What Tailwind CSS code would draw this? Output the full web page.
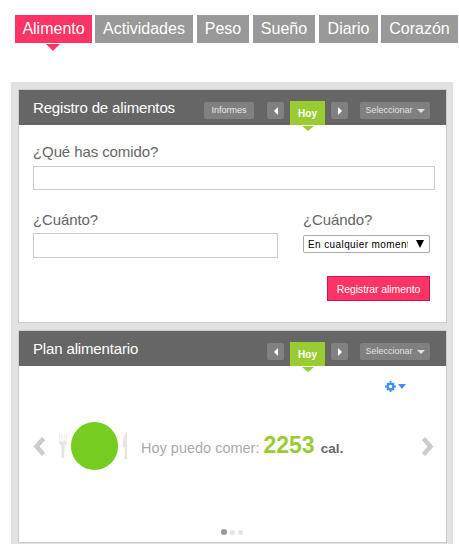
<!DOCTYPE html>
<html lang="es">
<head>
    <meta charset="UTF-8">
    <meta name="viewport" content="width=device-width, initial-scale=1.0">
    <title>Alimento</title>
    <script src="https://cdn.jsdelivr.net/npm/@tailwindcss/browser@4"></script>
</head>
<body class="bg-white h-[544px] w-[459px] overflow-hidden font-['Liberation_Sans',Arial,sans-serif]">
    <!-- pestañas -->
    <nav class="flex pl-[15px] pt-[15px] h-[82px] items-start text-[16px] text-white leading-[27px]">
        <a class="relative w-[77px] h-[28px] bg-[#ff3366] text-center mr-[3px]">Alimento
            <span class="absolute left-[31px] top-[29px] w-0 h-0 border-x-[7px] border-x-transparent border-t-[7px] border-t-[#ff3366]"></span>
        </a>
        <a class="w-[98px] h-[28px] bg-[#999999] text-center mr-[4px]">Actividades</a>
        <a class="w-[52px] h-[28px] bg-[#999999] text-center mr-[4px]">Peso</a>
        <a class="w-[62px] h-[28px] bg-[#999999] text-center mr-[4px]">Sueño</a>
        <a class="w-[59px] h-[28px] bg-[#999999] text-center mr-[3px]">Diario</a>
        <a class="w-[77px] h-[28px] bg-[#999999] text-center">Corazón</a>
    </nav>

    <main class="ml-[11px] w-[442px] h-[462px] bg-[#e1e3e2] pl-[7px] pr-[6px] pt-[7px]">
        <!-- registro -->
        <section class="h-[234px] bg-white border border-[#cccccc] mb-[7px]">
            <header class="flex items-start h-[35px] bg-[#666666] text-white">
                <h2 class="w-[185px] pl-[14px] pt-[8px] text-[15px] tracking-[-0.15px] leading-[20px] shrink-0">Registro de alimentos</h2>
                <span class="w-[50px] h-[17px] mt-[12px] mr-[13px] rounded-[2px] bg-[#808080] text-[#e8e8e8] text-[9px] leading-[16px] text-center">Informes</span>
                <span class="flex items-center justify-center w-[17px] h-[17px] mt-[12px] mr-[6px] rounded-[2px] bg-[#808080]">
                    <span class="w-0 h-0 border-y-[4px] border-y-transparent border-r-[4px] border-r-white"></span>
                </span>
                <span class="relative w-[35px] h-[24px] mt-[11px] mr-[6px] bg-[#99cc33] text-[10px] font-bold leading-[26px] text-center">Hoy
                    <span class="absolute left-[12px] top-[25px] w-0 h-0 border-x-[6px] border-x-transparent border-t-[5px] border-t-[#99cc33]"></span>
                </span>
                <span class="flex items-center justify-center w-[17px] h-[17px] mt-[12px] mr-[12px] rounded-[2px] bg-[#808080]">
                    <span class="w-0 h-0 border-y-[4px] border-y-transparent border-l-[4px] border-l-white"></span>
                </span>
                <span class="flex items-center justify-center gap-[4px] w-[70px] h-[17px] mt-[12px] pt-[1px] rounded-[2px] bg-[#808080] text-[#e0e0e0] text-[9px]">Seleccionar
                    <span class="w-0 h-0 border-x-[4px] border-x-transparent border-t-[4px] border-t-[#e0e0e0]"></span>
                </span>
            </header>
            <div class="pl-[14px] pr-[11px] pt-[17px] text-[#666666] text-[15px] tracking-[-0.1px]">
                <label class="block leading-[20px]">¿Qué has comido?</label>
                <div class="h-[24px] w-[402px] mt-[4px] border border-[#cccccc]"></div>
                <div class="flex mt-[20px]">
                    <div class="w-[270px]">
                        <label class="block leading-[20px]">¿Cuánto?</label>
                        <div class="h-[25px] w-[245px] mt-[3px] border border-[#cccccc]"></div>
                    </div>
                    <div class="w-[127px]">
                        <label class="block leading-[20px]">¿Cuándo?</label>
                        <div class="flex items-center h-[18px] mt-[5px] pl-[4px] border border-[#a9a9a9] rounded-[2px] text-black text-[10px] tracking-[0.4px]">
                            <span class="w-[100px] overflow-hidden whitespace-nowrap">En cualquier momento</span>
                            <span class="ml-[8px] w-0 h-0 border-x-[4px] border-x-transparent border-t-[8px] border-t-black"></span>
                        </div>
                    </div>
                </div>
                <div class="flex justify-end mt-[18px] pr-[5px]">
                    <button class="w-[103px] h-[25px] bg-[#ff3366] border border-[#c2184b] text-white text-[10.5px] leading-[22px]">Registrar alimento</button>
                </div>
            </div>
        </section>

        <!-- plan -->
        <section class="h-[213px] bg-white border border-[#cccccc]">
            <header class="flex items-start h-[35px] bg-[#666666] text-white">
                <h2 class="w-[248px] pl-[14px] pt-[8px] text-[15px] tracking-[-0.15px] leading-[20px] shrink-0">Plan alimentario</h2>
                <span class="flex items-center justify-center w-[17px] h-[17px] mt-[12px] mr-[6px] rounded-[2px] bg-[#808080]">
                    <span class="w-0 h-0 border-y-[4px] border-y-transparent border-r-[4px] border-r-white"></span>
                </span>
                <span class="relative w-[35px] h-[24px] mt-[11px] mr-[6px] bg-[#99cc33] text-[10px] font-bold leading-[26px] text-center">Hoy
                    <span class="absolute left-[12px] top-[25px] w-0 h-0 border-x-[6px] border-x-transparent border-t-[5px] border-t-[#99cc33]"></span>
                </span>
                <span class="flex items-center justify-center w-[17px] h-[17px] mt-[12px] mr-[12px] rounded-[2px] bg-[#808080]">
                    <span class="w-0 h-0 border-y-[4px] border-y-transparent border-l-[4px] border-l-white"></span>
                </span>
                <span class="flex items-center justify-center gap-[4px] w-[70px] h-[17px] mt-[12px] pt-[1px] rounded-[2px] bg-[#808080] text-[#e0e0e0] text-[9px]">Seleccionar
                    <span class="w-0 h-0 border-x-[4px] border-x-transparent border-t-[4px] border-t-[#e0e0e0]"></span>
                </span>
            </header>
            <div class="relative h-[176px] pt-[15px]">
                <div class="flex justify-end items-center gap-[2px] h-[11px] pr-[40px]">
                    <svg width="11" height="11" viewBox="0 0 12 12"><circle cx="6" cy="6" r="3.2" fill="none" stroke="#3b8ff5" stroke-width="2.6"/><path d="M5 0h2v2H5zM5 10h2v2H5zM0 5h2v2H0zM10 5h2v2h-2zM1.5 2.9l1.4-1.4 1.2 1.2-1.4 1.4zM7.9 9.3l1.4-1.4 1.2 1.2-1.4 1.4zM1.5 9.1l1.2-1.2 1.4 1.4-1.2 1.2zM7.9 2.7l1.2-1.2 1.4 1.4-1.2 1.2z" fill="#3b8ff5"/></svg>
                    <span class="w-0 h-0 border-x-[4px] border-x-transparent border-t-[5px] border-t-[#3b8ff5]"></span>
                </div>
                <div class="flex items-center h-[48px] mt-[30px] pl-[14px] pr-[12px]">
                    <svg class="mr-[12px]" width="13" height="19" viewBox="0 0 13 19"><path d="M10.5 1.5 3.5 9.5l7 8" fill="none" stroke="#cccccc" stroke-width="4.5"/></svg>
                    <svg class="mr-[3px]" width="10" height="30" viewBox="0 0 12 31"><path d="M1 1v10q0 3 3 4l.5 15h3L8 15q3-1 3-4V1h-1v9H8V1H7v9H5V1H4v9H2V1z" fill="#e4e6e5"/></svg>
                    <div class="w-[47px] h-[48px] rounded-full bg-[#77cc22]"></div>
                    <svg class="ml-[4px]" width="6" height="34" viewBox="0 0 7 33"><path d="M5 0Q1 5 1 18h2v14h3V0z" fill="#e4e6e5"/></svg>
                    <p class="ml-[13px] pb-[2px] flex items-baseline whitespace-nowrap text-[#aaaaaa] text-[14.5px]">Hoy puedo comer:
                        <b class="ml-[4px] text-[#99cc33] text-[23px]">2253</b>
                        <b class="ml-[6px] text-[#666666] text-[13.5px]">cal.</b>
                    </p>
                    <svg class="ml-auto" width="13" height="19" viewBox="0 0 13 19"><path d="m2.5 1.5 7 8-7 8" fill="none" stroke="#cccccc" stroke-width="4.5"/></svg>
                </div>
                <div class="absolute left-[202px] top-[163px] flex items-center gap-[3px]">
                    <span class="w-[6px] h-[6px] rounded-full bg-[#999999]"></span>
                    <span class="w-[5px] h-[5px] rounded-full bg-[#e6e6e6]"></span>
                    <span class="w-[5px] h-[5px] rounded-full bg-[#e6e6e6]"></span>
                </div>
            </div>
        </section>
    </main>
</body>
</html>
